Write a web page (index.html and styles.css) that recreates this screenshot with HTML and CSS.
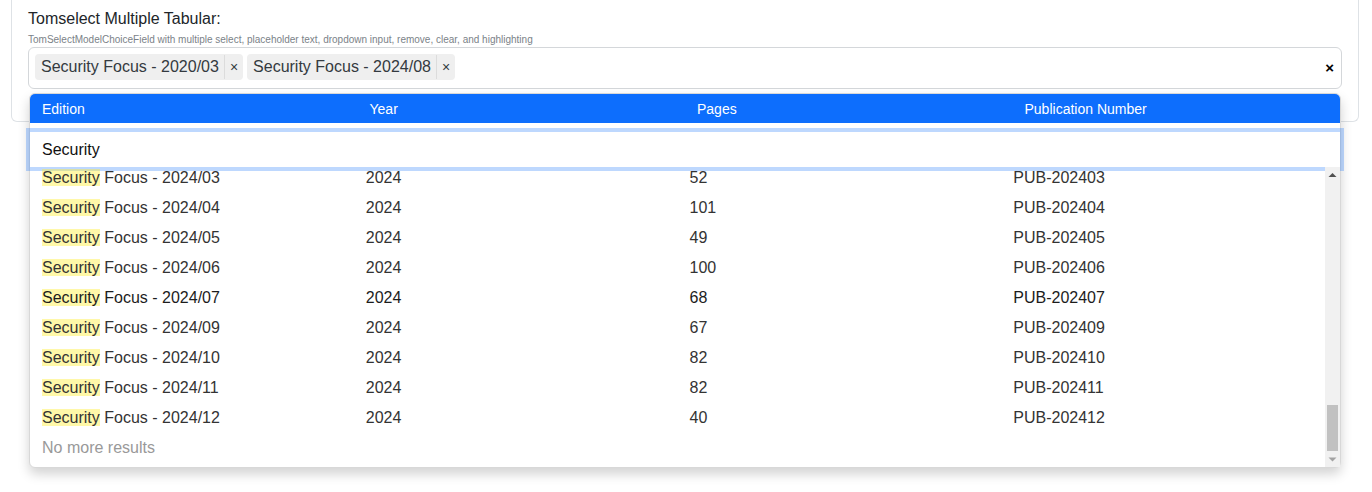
FILE: index.html
```html
<!DOCTYPE html>
<html lang="en">
<head>
<meta charset="utf-8">
<title>Tomselect Multiple Tabular</title>
<link rel="stylesheet" href="styles.css">
</head>
<body>
<div class="page">
<div class="card">
  <label class="lbl">Tomselect Multiple Tabular:</label>
  <div class="help">TomSelectModelChoiceField with multiple select, placeholder text, dropdown input, remove, clear, and highlighting</div>
  <div class="ts-wrapper">
    <div class="ts-control">
      <div class="item">Security Focus - 2020/03<span class="remove">×</span></div>
      <div class="item">Security Focus - 2024/08<span class="remove">×</span></div>
      <span class="clear">×</span>
    </div>
    <div class="dropdown">
      <div class="dd-head"><div>Edition</div><div>Year</div><div>Pages</div><div>Publication Number</div></div>
      <div class="dd-input-wrap"><div class="dd-input">Security</div></div>
      <div class="dd-body">
      <div class="dd-list">
        <div class="rows">
          <div class="opt"><span><mark>Security</mark> Focus - 2024/03</span><span>2024</span><span>52</span><span>PUB-202403</span></div>
          <div class="opt"><span><mark>Security</mark> Focus - 2024/04</span><span>2024</span><span>101</span><span>PUB-202404</span></div>
          <div class="opt"><span><mark>Security</mark> Focus - 2024/05</span><span>2024</span><span>49</span><span>PUB-202405</span></div>
          <div class="opt"><span><mark>Security</mark> Focus - 2024/06</span><span>2024</span><span>100</span><span>PUB-202406</span></div>
          <div class="opt active"><span><mark>Security</mark> Focus - 2024/07</span><span>2024</span><span>68</span><span>PUB-202407</span></div>
          <div class="opt"><span><mark>Security</mark> Focus - 2024/09</span><span>2024</span><span>67</span><span>PUB-202409</span></div>
          <div class="opt"><span><mark>Security</mark> Focus - 2024/10</span><span>2024</span><span>82</span><span>PUB-202410</span></div>
          <div class="opt"><span><mark>Security</mark> Focus - 2024/11</span><span>2024</span><span>82</span><span>PUB-202411</span></div>
          <div class="opt"><span><mark>Security</mark> Focus - 2024/12</span><span>2024</span><span>40</span><span>PUB-202412</span></div>
          <div class="no-res">No more results</div>
        </div>
      </div>
      <div class="vscroll">
        <div class="sb-btn"><svg width="15" height="15" viewBox="0 0 15 15"><path d="M3.5 10 L7.5 6 L11.5 10 Z" fill="#505050"/></svg></div>
        <div class="sb-track"><div class="sb-thumb"></div></div>
        <div class="sb-btn"><svg width="15" height="15" viewBox="0 0 15 15"><path d="M3.5 5.5 L7.5 9.5 L11.5 5.5 Z" fill="#a3a3a3"/></svg></div>
      </div>
      </div>
    </div>
  </div>
</div>
</div>
</body>
</html>
```

FILE: styles.css
```css
html, body {
  margin: 0;
  padding: 0;
  background: #fff;
}

body {
  font-family: "Liberation Sans", Arial, sans-serif;
  color: #212529;
  font-size: 16px;
}

.page {
  min-height: 492px;
  padding: 0 13px 0 11px;
}

.card {
  border: 1px solid #dee2e6;
  border-top: 0;
  border-radius: 0 0 6px 6px;
  padding: 7px 16px 32px;
}

.lbl {
  display: block;
  font-size: 16px;
  line-height: 24px;
  color: #212529;
}

.help {
  font-size: 10px;
  line-height: 15px;
  margin-top: 1px;
  color: #7b8288;
}

.ts-wrapper {
  position: relative;
}

.ts-control {
  display: flex;
  flex-wrap: wrap;
  align-items: flex-start;
  border: 1px solid #d4d7da;
  border-radius: 6px;
  padding: 6px 7px 5px 6px;
  background: #fff;
}

.item {
  display: flex;
  align-items: center;
  height: 26px;
  line-height: 24px;
  padding: 1px 0 1px 6px;
  box-sizing: border-box;
  margin: 0 4px 3px 0;
  background: #efefef;
  border-radius: 4px;
  color: #343a40;
  font-size: 16px;
}

.remove {
  display: block;
  margin-left: 5px;
  padding: 0 5px;
  border-left: 1px solid #dcdcdc;
  font-size: 14px;
  line-height: 24px;
  color: #343a40;
}

.clear {
  margin-left: auto;
  align-self: center;
  margin-top: -2px;
  font-weight: 700;
  font-size: 15px;
  line-height: 16px;
  color: #000;
}

.dropdown {
  position: absolute;
  top: calc(100% + 4px);
  left: 1px;
  right: 1px;
  z-index: 10;
  background: #fff;
  border: 1px solid #d8d8d8;
  border-radius: 6px;
  box-shadow: 0 6px 12px rgba(0, 0, 0, 0.175);
}

.dd-head {
  display: grid;
  grid-template-columns: repeat(4, 1fr);
  align-items: center;
  height: 29px;
  background: #0d6efd;
  color: #fff;
  font-size: 14px;
  border-radius: 5px 5px 0 0;
}

.dd-head > div {
  padding-left: 12px;
}

.dd-input-wrap {
  padding-top: 9px;
}

.dd-input {
  height: 35px;
  line-height: 35px;
  padding: 0 12px;
  font-size: 16px;
  color: #111;
  box-shadow: 0 0 0 4px rgba(13, 110, 253, 0.27);
}

.dd-body {
  display: flex;
  height: 300px;
}

.dd-list {
  flex: 1;
  min-width: 0;
  overflow: hidden;
  display: flex;
  flex-direction: column-reverse;
  border-bottom-left-radius: 5px;
}

.rows {
  flex: none;
  padding-bottom: 4px;
}

.vscroll {
  width: 15px;
  flex: none;
  display: flex;
  flex-direction: column;
  background: #f1f1f1;
}

.sb-btn {
  height: 15px;
  flex: none;
}

.sb-btn svg {
  display: block;
}

.sb-track {
  flex: 1;
  display: flex;
  flex-direction: column;
  justify-content: flex-end;
  padding: 0 2px 1px;
}

.sb-thumb {
  height: 46px;
  background: #c1c1c1;
}

.opt {
  display: grid;
  grid-template-columns: repeat(4, 1fr);
  padding: 5px 0;
  line-height: 20px;
  color: #333;
}

.opt.active {
  color: #1c1c1c;
}

.opt > span {
  padding-left: 12px;
  white-space: nowrap;
}

mark {
  background: rgba(255, 237, 40, 0.4);
  color: inherit;
  padding: 0;
}

.no-res {
  padding: 5px 12px;
  line-height: 20px;
  color: #999;
}
```
